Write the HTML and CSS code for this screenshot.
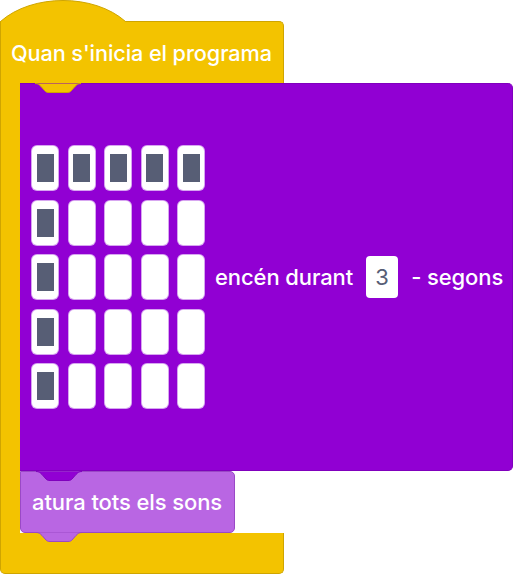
FILE: index.html
```html
<!DOCTYPE html>
<html lang="ca">
<head>
<meta charset="utf-8">
<title>Quan s'inicia el programa</title>
<link rel="stylesheet" href="styles.css">
</head>
<body>
<div class="script">
  <svg class="hat" width="127" height="23" viewBox="0 0 127 23">
    <path d="M0.5,23 L0.5,21.5 C32,-6.5 94,-6.5 125.5,21.5 L127,21.5 L127,23 Z" fill="#f3c300"/>
    <path d="M0.5,23 L0.5,21.5 C32,-6.5 94,-6.5 125.5,21.5 L127,21.5" fill="none" stroke="#cfa500" stroke-width="1"/>
  </svg>
  <div class="c-block">
    <div class="arm arm-top"><span class="label title">Quan s'inicia el programa</span></div>
    <div class="mouth">
      <div class="spine"></div>
      <div class="stack">
        <div class="block led-block">
          <svg class="tab" width="46" height="11" viewBox="0 0 46 11"><path d="M0,0.5 C3,0.5 4,1.5 6,3.5 L10,8 C11,9 12,9.5 14,9.5 H32 C34,9.5 35,9 36,8 L40,3.5 C42,1.5 43,0.5 46,0.5" fill="#f3c300" stroke="#cfa500"/></svg>
          <div class="led-grid">
            <span class="led on"></span><span class="led on"></span><span class="led on"></span><span class="led on"></span><span class="led on"></span>
            <span class="led on"></span><span class="led"></span><span class="led"></span><span class="led"></span><span class="led"></span>
            <span class="led on"></span><span class="led"></span><span class="led"></span><span class="led"></span><span class="led"></span>
            <span class="led on"></span><span class="led"></span><span class="led"></span><span class="led"></span><span class="led"></span>
            <span class="led on"></span><span class="led"></span><span class="led"></span><span class="led"></span><span class="led"></span>
          </div>
          <span class="label text-a">encén durant</span>
          <span class="num">3</span>
          <span class="label">- segons</span>
        </div>
        <div class="block sound-block">
          <svg class="tab" width="46" height="11" viewBox="0 0 46 11"><path d="M0,0.5 C3,0.5 4,1.5 6,3.5 L10,8 C11,9 12,9.5 14,9.5 H32 C34,9.5 35,9 36,8 L40,3.5 C42,1.5 43,0.5 46,0.5" fill="#9100d3" stroke="#8000bd"/></svg>
          <span class="label">atura tots els sons</span>
        </div>
      </div>
    </div>
    <div class="arm arm-bottom">
      <svg class="tab tab-bottom" width="46" height="11" viewBox="0 0 46 11"><path d="M0,0.5 C3,0.5 4,1.5 6,3.5 L10,8 C11,9 12,9.5 14,9.5 H32 C34,9.5 35,9 36,8 L40,3.5 C42,1.5 43,0.5 46,0.5" fill="#b966e3" stroke="#9a49c6"/></svg>
    </div>
  </div>
</div>
</body>
</html>
```

FILE: styles.css
```css
* { box-sizing: border-box; }
html, body { margin: 0; padding: 0; background: #ffffff; }
body {
  font-family: Inter, "Noto Sans", "Liberation Sans", sans-serif;
  width: 513px;
  height: 575px;
  overflow: hidden;
}
.script {
  display: flex;
  flex-direction: column;
  width: 513px;
}
.hat {
  display: block;
  position: relative;
  z-index: 2;
  margin-bottom: -1px;
}
.c-block {
  display: flex;
  flex-direction: column;
}
.arm {
  position: relative;
  width: 284px;
  background: #f3c300;
  border: 1px solid #cfa500;
}
.arm-top {
  height: 62px;
  margin-top: -1px;
  border-left: 1px solid #cfa500;
  border-bottom: none;
  border-radius: 0 5px 0 0;
  display: flex;
  align-items: center;
  padding-left: 10px;
  padding-top: 1px;
}
.label {
  color: #ffffff;
  font-size: 22px;
  font-weight: 500;
  letter-spacing: -0.1px;
  white-space: nowrap;
}
.label.title { font-size: 21.7px; }
.mouth {
  display: flex;
}
.spine {
  width: 20px;
  background: #f3c300;
  border-left: 1px solid #cfa500;
}
.stack {
  display: flex;
  flex-direction: column;
  align-items: flex-start;
}
.block {
  position: relative;
  display: flex;
  align-items: center;
}
.tab {
  position: absolute;
  top: -1px;
  left: 15px;
  display: block;
}
.led-block {
  width: 493px;
  height: 388px;
  background: #9100d3;
  border: 1px solid #8000bd;
  border-left: none;
  border-radius: 0 5px 5px 0;
  padding-left: 12px;
}
.led-grid {
  display: grid;
  grid-template-columns: repeat(5, 26px);
  grid-auto-rows: 44px;
  gap: 10.5px;
}
.led {
  display: flex;
  align-items: center;
  justify-content: center;
  background: #ffffff;
  border-radius: 5px;
  box-shadow: 0 0 0 1px #d7a6f0;
}
.led.on::after {
  content: "";
  width: 17px;
  height: 28px;
  background: #575e75;
}
.text-a { margin-left: 11px; }
.num {
  display: flex;
  align-items: center;
  justify-content: center;
  width: 32px;
  height: 42px;
  margin: 0 13px;
  background: #ffffff;
  border-radius: 4px;
  color: #575e75;
  font-size: 22px;
}
.sound-block {
  width: 215px;
  height: 62px;
  background: #b966e3;
  border: 1px solid #9a49c6;
  border-left: 1px solid #9a49c6;
  border-radius: 0 5px 5px 5px;
  padding-left: 11px;
}
.arm-bottom {
  height: 41px;
  border-top: none;
  border-radius: 0 0 5px 5px;
}
.tab-bottom {
  left: 35px;
  top: -1px;
}
```
